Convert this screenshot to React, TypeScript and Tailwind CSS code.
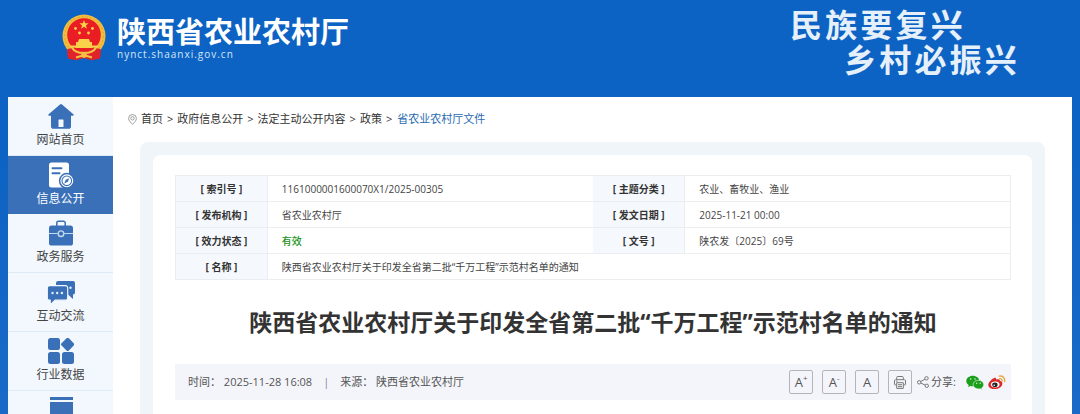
import { ReactNode } from 'react';

interface NavItem {
  id: string;
  label?: string;
  icon: ReactNode;
  active?: boolean;
}

const HomeIcon = () => (
  <svg viewBox="0 0 26 26" className="w-[26px] h-[26px]" fill="currentColor" aria-hidden="true">
    <path d="M12 1.4a1.6 1.6 0 0 1 2 0l11.4 9.8c.7.7.4 1.6-.6 1.6H23v10.4a2.6 2.6 0 0 1-2.6 2.6H5.6A2.6 2.6 0 0 1 3 23.2V12.8H1.2c-1 0-1.3-.9-.6-1.6z" />
    <rect x="10.5" y="16.5" width="5" height="7.5" rx=".5" fill="#f2f8fe" />
  </svg>
);

const InfoIcon = () => (
  <svg viewBox="0 0 26 26" className="w-[26px] h-[26px]" aria-hidden="true">
    <path fill="currentColor" d="M3.5.5h15A2.500 2.500 0 0 1 21 3v22.500H3.500A2.500 2.500 0 0 1 1 23V3A2.500 2.500 0 0 1 3.500.5z" />
    <path d="M4.500 6.300h9M4.500 11.300h7" stroke="#3a70b7" strokeWidth="2" strokeLinecap="round" />
    <circle cx="18.800" cy="18.800" r="7.200" fill="currentColor" stroke="#3a70b7" strokeWidth="1.500" />
    <circle cx="18.800" cy="18.800" r="4.800" fill="none" stroke="#3a70b7" strokeWidth="1.100" />
    <path d="m21.300 16.200-1.400 3.600-3.700 1.600 1.500-3.700z" fill="#3a70b7" />
  </svg>
);

const ServiceIcon = () => (
  <svg viewBox="0 0 26 26" className="w-[26px] h-[26px]" aria-hidden="true">
    <path d="M8.800 6V2.800A1.600 1.600 0 0 1 10.400 1.200h5.200a1.600 1.600 0 0 1 1.600 1.600V6" fill="none" stroke="currentColor" strokeWidth="1.500" />
    <rect x="1" y="5.500" width="24" height="20" rx="2.600" fill="currentColor" />
    <path d="M1 13.500h8.800M16.200 13.500H25" stroke="#c3d8ef" strokeWidth="1.100" />
    <circle cx="13" cy="13.700" r="2.800" fill="none" stroke="#c3d8ef" strokeWidth="1.400" />
  </svg>
);

const ChatIcon = () => (
  <svg viewBox="0 0 28 26" className="w-[28px] h-[26px]" aria-hidden="true">
    <path fill="currentColor" d="M11 2h15a2 2 0 0 1 2 2v9.500a2 2 0 0 1-2 2V20l-5-4.500H11a2 2 0 0 1-2-2V4a2 2 0 0 1 2-2z" />
    <path fill="currentColor" stroke="#f2f8fe" strokeWidth="1.200" d="M2.500 6.700h16A2.200 2.200 0 0 1 20.700 9v10a2.200 2.200 0 0 1-2.200 2.200H8.200L3.200 26v-4.800h-.7A2.200 2.200 0 0 1 .3 19V9a2.200 2.200 0 0 1 2.200-2.300z" />
    <g fill="#e4effa">
      <circle cx="5.500" cy="14" r="1.200" />
      <circle cx="10.200" cy="14" r="1.200" />
      <circle cx="14.900" cy="14" r="1.200" />
      <circle cx="23.500" cy="8.700" r="1.200" />
    </g>
  </svg>
);

const DataIcon = () => (
  <svg viewBox="0 0 26 26" className="w-[26px] h-[26px]" fill="currentColor" aria-hidden="true">
    <rect x="0" y="0" width="12" height="12" rx="2.500" />
    <rect x="0" y="14" width="12" height="12" rx="2.500" />
    <rect x="14" y="14" width="12" height="12" rx="2.500" />
    <path d="M18.500.3a2 2 0 0 1 2.400 0l4.800 4.900a1.600 1.600 0 0 1 0 2.400l-4.800 4.900a1.800 1.800 0 0 1-2.400 0l-4.900-4.900a1.600 1.600 0 0 1 0-2.400z" />
  </svg>
);

const ArchiveIcon = () => (
  <svg viewBox="0 0 26 26" className="w-[26px] h-[26px]" fill="currentColor" aria-hidden="true">
    <rect x="2" y="0" width="23" height="3" />
    <rect x="2" y="5" width="23" height="21" />
  </svg>
);

const Emblem = () => (
  <svg viewBox="0 0 44 47" className="w-[44px] h-[47px] shrink-0" role="img" aria-label="国徽">
    <path fill="#e0222a" d="M5 33h34l-1 11.500-8 1.800-8-2.300-8 2.300-8-1.800z" />
    <circle cx="22" cy="22" r="21.500" fill="#f2bd3c" />
    <circle cx="22" cy="22" r="19.300" fill="none" stroke="#dfa232" strokeWidth="1" strokeDasharray="2 2" />
    <circle cx="22" cy="21" r="16.800" fill="#ea1c24" />
    <path fill="#f9d24a" d="m22 6 1.200 3.200 3.400.1-2.700 2.100 1 3.300-2.900-1.900-2.900 1.900 1-3.300-2.700-2.100 3.400-.1z" />
    <g fill="#f9d24a">
      <circle cx="13.500" cy="14.500" r="1.400" />
      <circle cx="30.500" cy="14.500" r="1.400" />
      <circle cx="17.500" cy="19" r="1.400" />
      <circle cx="26.500" cy="19" r="1.400" />
      <path d="M17 25h10l1 3h2v3.500h5.500V34h-27v-2.500H14V28h2z" />
    </g>
    <path fill="#e0222a" d="M5.500 35 13 33.500c2 3 5.500 4 9 4s7-1 9-4l7.500 1.500v7.500L31 45.500l-9-2.500-9 2.500-7.500-3z" />
    <path fill="none" stroke="#f4c143" strokeWidth="2" d="M10 33.500c2 4 6 5.500 12 5.500s10-1.500 12-5.500M14 43.500l5-1.500h6l5 1.500" />
    <circle cx="22" cy="41" r="2.800" fill="#f4c143" />
  </svg>
);

const PinIcon = () => (
  <svg viewBox="0 0 9 11" className="w-[9px] h-[11px]" fill="none" stroke="#888" strokeWidth=".8" aria-hidden="true">
    <path d="M4.500 10.300C2.500 8.500.6 6.500.6 4.400a3.900 3.900 0 0 1 7.800 0c0 2.100-1.900 4.100-3.900 5.900z" />
    <circle cx="4.500" cy="4.300" r="1.700" />
  </svg>
);

const PrintIcon = () => (
  <svg viewBox="0 0 12 13" className="w-[12px] h-[13px]" fill="none" stroke="#777" aria-hidden="true">
    <path d="M2.700 3.500v-2a1 1 0 0 1 1-1h4.600a1 1 0 0 1 1 1v2M2.500 9H1.500a1 1 0 0 1-1-1V4.700a1 1 0 0 1 1-1h9a1 1 0 0 1 1 1V8a1 1 0 0 1-1 1h-1" />
    <path d="M2.700 6.700h6.600v5.700H2.700zM4 8.700h4M4 10.600h4" />
    <path d="M2 5.200h1.500" />
  </svg>
);

const ShareIcon = () => (
  <svg viewBox="0 0 12 12" className="w-[12px] h-[12px]" fill="none" stroke="#777" aria-hidden="true">
    <circle cx="2.200" cy="6.300" r="1.700" />
    <circle cx="9.500" cy="2.300" r="1.700" />
    <circle cx="9.800" cy="9.800" r="1.700" />
    <path d="m3.700 5.500 4.300-2.400M3.800 7l4.500 2.200" />
  </svg>
);

const WechatIcon = () => (
  <svg viewBox="0 0 18 15" className="w-[18px] h-[15px]" aria-hidden="true">
    <path fill="#1b9f1b" d="M6.800.8C3.200.8.3 3.100.3 6c0 1.700.9 3.100 2.400 4.100l-.7 2 2.400-1.200c.8.2 1.600.3 2.400.3 3.600 0 6.500-2.300 6.500-5.200S10.400.8 6.800.8z" />
    <path fill="#1b9f1b" stroke="#f4f5fb" strokeWidth=".6" d="M12.400 5.300c-3 0-5.300 1.900-5.300 4.300s2.300 4.300 5.300 4.300c.6 0 1.200-.1 1.800-.2l2 1-.5-1.700c1.200-.8 2-2 2-3.400 0-2.400-2.400-4.300-5.300-4.300z" />
    <g fill="#d9f2d9">
      <circle cx="4.700" cy="4" r=".8" />
      <circle cx="9" cy="4" r=".8" />
      <circle cx="10.700" cy="8.300" r=".7" />
      <circle cx="14.200" cy="8.300" r=".7" />
    </g>
  </svg>
);

const WeiboIcon = () => (
  <svg viewBox="0 0 18 15" className="w-[18px] h-[15px]" aria-hidden="true">
    <path fill="#d9292b" d="M6.200 2.900c1.400-.4 2.200.2 1.900 1.700 2-.8 4-.7 3.700 1.200 2 .5 2.900 1.700 2.500 3.400-.6 2.900-3.800 4.900-7.300 4.900S.3 12.700.3 9.900c0-2.200 3.400-6.200 5.900-7z" />
    <ellipse cx="7.200" cy="9.500" rx="4.300" ry="2.900" fill="#fff" />
    <ellipse cx="6.900" cy="9.700" rx="2.700" ry="2.300" fill="#222" />
    <circle cx="6.200" cy="10.200" r=".8" fill="#fff" />
    <path d="M11.600 3.700c1.600-.4 2.800.7 2.500 2.500M11.300 1.100c3.300-.6 6 1.700 5.300 5.600" fill="none" stroke="#f0a23a" strokeWidth="1.300" strokeLinecap="round" />
  </svg>
);

const navItems: NavItem[] = [
  { id: 'home', label: '网站首页', icon: <HomeIcon /> },
  { id: 'info', label: '信息公开', icon: <InfoIcon />, active: true },
  { id: 'service', label: '政务服务', icon: <ServiceIcon /> },
  { id: 'chat', label: '互动交流', icon: <ChatIcon /> },
  { id: 'data', label: '行业数据', icon: <DataIcon /> },
  { id: 'archive', icon: <ArchiveIcon /> },
];

const crumbs = ['首页', '政府信息公开', '法定主动公开内容', '政策'];

const labelCell = 'h-[26px] bg-[#f5f9fd] border-r border-[#ebeef0] text-center font-bold text-[#333]';
const valueCell = 'px-[14px] text-left';
const toolButton = 'flex w-6 h-6 items-center justify-center rounded-xs border border-[#b5b5b9] text-[13px] leading-none font-medium text-[#555]';

const Header = () => (
  <header className="flex h-[97px] items-start justify-between pl-[62px] pr-[60px] text-white">
    <a href="#" className="flex items-start gap-[11px] pt-[14px]">
      <Emblem />
      <div>
        <h1 className="text-[29px] leading-[35px] font-bold">陕西省农业农村厅</h1>
        <p className="text-[10px] leading-[10px] tracking-widest text-[#d5e6f8]">nynct.shaanxi.gov.cn</p>
      </div>
    </a>
    <p className="pt-[7px] text-[32px] leading-[35px] font-bold tracking-widest text-[#e6f0fb]">
      <span className="block">民族要复兴</span>
      <span className="block pl-[54px]">乡村必振兴</span>
    </p>
  </header>
);

const Sidebar = () => (
  <nav className="w-[105px] shrink-0 bg-[#f2f8fe]">
    {navItems.map((item) => (
      <a
        key={item.id}
        href="#"
        aria-label={item.label ?? '更多'}
        className={
          item.active
            ? 'flex h-[58px] flex-col items-center bg-[#3a70b7] pt-[6px] text-white'
            : 'flex h-[59px] flex-col items-center border-b border-[#deebf7] pt-[6px] text-[#3a70b7]'
        }
      >
        {item.icon}
        {item.label && (
          <span className={item.active ? 'text-xs leading-[22px]' : 'text-xs leading-[22px] text-[#444]'}>
            {item.label}
          </span>
        )}
      </a>
    ))}
  </nav>
);

const Breadcrumb = () => (
  <div className="flex h-[45px] items-center gap-1 pl-[15px] text-[11px] text-[#333]">
    <PinIcon />
    {crumbs.map((crumb) => (
      <span key={crumb} className="flex gap-1">
        <a href="#">{crumb}</a>
        <span>&gt;</span>
      </span>
    ))}
    <a href="#" className="pl-px text-[#2a6ab0]">省农业农村厅文件</a>
  </div>
);

const InfoTable = () => (
  <table className="w-full table-fixed border-collapse border border-[#ebeef0] text-[10px] leading-4 text-[#444]">
    <colgroup>
      <col className="w-[11%]" />
      <col className="w-[39%]" />
      <col className="w-[11%]" />
      <col className="w-[39%]" />
    </colgroup>
    <tbody>
      <tr className="border-b border-[#ebeef0]">
        <th scope="row" className={labelCell}>[ 索引号 ]</th>
        <td className={valueCell}>1161000001600070X1/2025-00305</td>
        <th scope="row" className={labelCell}>[ 主题分类 ]</th>
        <td className={valueCell}>农业、畜牧业、渔业</td>
      </tr>
      <tr className="border-b border-[#ebeef0]">
        <th scope="row" className={labelCell}>[ 发布机构 ]</th>
        <td className={valueCell}>省农业农村厅</td>
        <th scope="row" className={labelCell}>[ 发文日期 ]</th>
        <td className={valueCell}>2025-11-21 00:00</td>
      </tr>
      <tr className="border-b border-[#ebeef0]">
        <th scope="row" className={labelCell}>[ 效力状态 ]</th>
        <td className={valueCell}>
          <span className="font-medium text-[#1a921a]">有效</span>
        </td>
        <th scope="row" className={labelCell}>[ 文号 ]</th>
        <td className={valueCell}>陕农发〔2025〕69号</td>
      </tr>
      <tr>
        <th scope="row" className={labelCell}>[ 名称 ]</th>
        <td colSpan={3} className={valueCell}>
          陕西省农业农村厅关于印发全省第二批“千万工程”示范村名单的通知
        </td>
      </tr>
    </tbody>
  </table>
);

const MetaBar = () => (
  <div className="flex h-9 items-center justify-between bg-[#f4f5fb] pl-[13px] pr-[5px] text-[11px] text-[#555]">
    <div className="flex items-center">
      <span>时间： 2025-11-28 16:08</span>
      <span className="px-[11px] text-[#888]">|</span>
      <span>来源： 陕西省农业农村厅</span>
    </div>
    <div className="flex items-center">
      <div className="flex gap-[9px]">
        <button className={toolButton} aria-label="放大字体">
          A<sup className="text-[8px]">+</sup>
        </button>
        <button className={toolButton} aria-label="缩小字体">
          A<sup className="text-[8px]">-</sup>
        </button>
        <button className={toolButton} aria-label="默认字体">A</button>
        <button className={toolButton} aria-label="打印">
          <PrintIcon />
        </button>
      </div>
      <span className="flex items-center gap-[2px] pl-[5px] pr-[10px]">
        <ShareIcon />
        分享:
      </span>
      <div className="flex gap-1">
        <a href="#" aria-label="分享到微信">
          <WechatIcon />
        </a>
        <a href="#" aria-label="分享到微博">
          <WeiboIcon />
        </a>
      </div>
    </div>
  </div>
);

const App = () => {
  return (
    <div className="flex h-screen flex-col overflow-hidden bg-linear-to-b from-[#0d63c3] from-40% to-[#196ac8] font-['Open_Sans','Noto_Sans_CJK_SC',sans-serif]">
      <Header />
      <div className="mx-2 flex min-h-0 flex-1 bg-white">
        <Sidebar />
        <main className="flex min-w-0 flex-1 flex-col">
          <Breadcrumb />
          <div className="mx-[27px] flex-1 rounded-t-lg bg-[#f0f5f9] px-[13px] pt-[13px]">
            <article className="h-full rounded-t-lg bg-white pl-[22px] pr-[21px] pt-5">
              <InfoTable />
              <h2 className="py-[26px] text-center text-[23px] leading-8 font-bold text-[#333]">
                陕西省农业农村厅关于印发全省第二批“千万工程”示范村名单的通知
              </h2>
              <MetaBar />
            </article>
          </div>
        </main>
      </div>
    </div>
  );
};

export default App;
